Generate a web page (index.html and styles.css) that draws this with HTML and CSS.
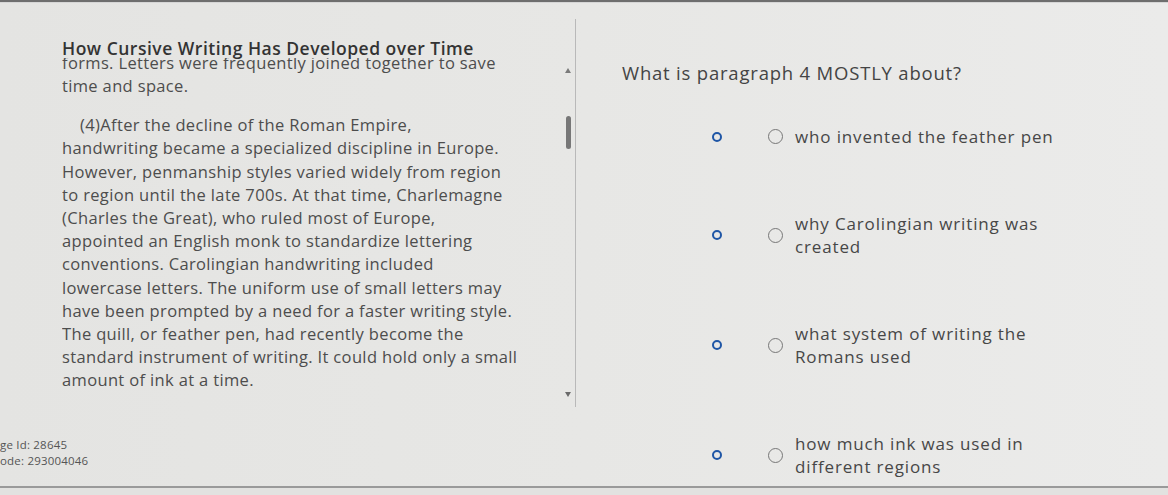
FILE: index.html
```html
<!DOCTYPE html>
<html>
<head>
  <meta charset="UTF-8">
  <meta name="viewport" content="width=device-width, initial-scale=1.0">
  <title>How Cursive Writing Has Developed over Time</title>
  <link rel="stylesheet" href="styles.css">
</head>
<body>
  <div class="topbar"></div>

  <main class="screen">
    <section class="reading">
      <div class="passage">
        <div class="passage-body">
          <h1 class="title">How Cursive Writing Has Developed over Time</h1>
          <div class="viewport">
            <div class="scroll-text">
              <p>forms. Letters were frequently joined together to save<br>time and space.</p>
              <p class="indent">(4)After the decline of the Roman Empire,<br>handwriting became a specialized discipline in Europe.<br>However, penmanship styles varied widely from region<br>to region until the late 700s. At that time, Charlemagne<br>(Charles the Great), who ruled most of Europe,<br>appointed an English monk to standardize lettering<br>conventions. Carolingian handwriting included<br>lowercase letters. The uniform use of small letters may<br>have been prompted by a need for a faster writing style.<br>The quill, or feather pen, had recently become the<br>standard instrument of writing. It could hold only a small<br>amount of ink at a time.</p>
            </div>
          </div>
        </div>
        <!-- fake scrollbar of the passage pane -->
        <div class="scrollbar">
          <span class="arrow up"></span>
          <span class="thumb"></span>
          <span class="arrow down"></span>
        </div>
      </div>
      <div class="item-info">ge Id: 28645<br>ode: 293004046</div>
    </section>

    <section class="question">
      <p class="prompt">What is paragraph 4 MOSTLY about?</p>
      <ul class="options">
        <li class="option">
          <span class="ring"></span>
          <span class="radio"></span>
          <span class="label">who invented the feather pen</span>
        </li>
        <li class="option">
          <span class="ring"></span>
          <span class="radio"></span>
          <span class="label">why Carolingian writing was<br>created</span>
        </li>
        <li class="option">
          <span class="ring"></span>
          <span class="radio"></span>
          <span class="label">what system of writing the<br>Romans used</span>
        </li>
        <li class="option">
          <span class="ring"></span>
          <span class="radio"></span>
          <span class="label">how much ink was used in<br>different regions</span>
        </li>
      </ul>
    </section>
  </main>

  <div class="bottombar"></div>
</body>
</html>
```

FILE: styles.css
```css
* {
  box-sizing: border-box;
}

body {
  margin: 0;
  width: 1168px;
  height: 495px;
  overflow: hidden;
  font-family: "Open Sans", "Noto Sans", sans-serif;
  color: #4d4d4d;
  background: linear-gradient(90deg, #e4e4e2 0%, #e7e7e5 50%, #ebebea 100%);
}

.topbar {
  height: 3px;
  background: #6e6e6e;
  border-bottom: 1px solid #d6d6d6;
}

.screen {
  display: flex;
  height: 483px;
}

/* left: reading passage */
.reading {
  width: 576px;
  flex: none;
}

.passage {
  display: grid;
  grid-template-columns: 1fr 14px;
  height: 388px;
  margin-top: 16px;
  border-right: 1px solid #b9b9b9;
}

.passage-body {
  display: flex;
  flex-direction: column;
  padding-left: 62px;
  padding-top: 19px;
  min-width: 0;
}

.title {
  margin: 0;
  font-size: 17.5px;
  line-height: 20px;
  font-weight: 600;
  letter-spacing: 0.5px;
  color: #333;
  white-space: nowrap;
}

.viewport {
  flex: 1;
  overflow: hidden;
}

.scroll-text {
  margin-top: -7px;
  font-size: 16.5px;
  line-height: 23.2px;
  letter-spacing: 0.35px;
  white-space: nowrap;
}

.scroll-text p {
  margin: 0 0 15.7px;
}

.indent {
  text-indent: 18px;
}

.scrollbar {
  display: flex;
  flex-direction: column;
  align-items: center;
  padding-top: 49px;
}

.arrow {
  width: 0;
  height: 0;
  border-left: 3.5px solid transparent;
  border-right: 3.5px solid transparent;
}

.arrow.up {
  border-bottom: 5px solid #7a7a7a;
}

.arrow.down {
  margin-top: auto;
  margin-bottom: 10px;
  border-top: 5px solid #6a6a6a;
}

.thumb {
  width: 5px;
  height: 33px;
  margin-top: 43px;
  border-radius: 3px;
  background: #777;
}

.item-info {
  margin-top: 30px;
  font-size: 11.5px;
  line-height: 16px;
  letter-spacing: 0.2px;
  color: #555;
}

/* right: question and answer choices */
.question {
  flex: 1;
  padding-left: 46px;
  padding-top: 59px;
}

.prompt {
  margin: 0;
  font-size: 18.5px;
  line-height: 22px;
  letter-spacing: 0.8px;
  color: #444;
}

.options {
  list-style: none;
  margin: 41px 0 0;
  padding: 0 0 0 90px;
  display: flex;
  flex-direction: column;
  gap: 63px;
}

.option {
  display: flex;
  align-items: center;
}

.ring {
  width: 10px;
  height: 10px;
  flex: none;
  border: 2.5px solid #1f56a6;
  border-radius: 50%;
}

.radio {
  width: 15px;
  height: 15px;
  flex: none;
  margin-left: 46px;
  border: 1.5px solid #777;
  border-radius: 50%;
}

.label {
  margin-left: 12px;
  font-size: 17px;
  line-height: 23.5px;
  letter-spacing: 0.85px;
  color: #474747;
  white-space: nowrap;
}

.bottombar {
  height: 9px;
  border-top: 2px solid #9a9a9a;
  background: #e2e2e0;
}
```
